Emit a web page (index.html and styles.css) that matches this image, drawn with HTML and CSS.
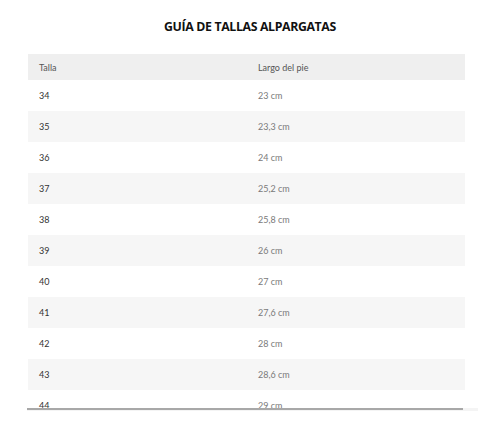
FILE: index.html
```html
<!DOCTYPE html>
<html lang="es">
<head>
<meta charset="utf-8">
<link rel="stylesheet" href="styles.css">
</head>
<body>
<h1 class="title">GUÍA DE TALLAS ALPARGATAS</h1>
<div class="table-wrap">
  <div class="table">
    <div class="row head"><span class="c1">Talla</span><span class="c2">Largo del pie</span></div>
    <div class="row"><span class="c1">34</span><span class="c2">23 cm</span></div>
    <div class="row alt"><span class="c1">35</span><span class="c2">23,3 cm</span></div>
    <div class="row"><span class="c1">36</span><span class="c2">24 cm</span></div>
    <div class="row alt"><span class="c1">37</span><span class="c2">25,2 cm</span></div>
    <div class="row"><span class="c1">38</span><span class="c2">25,8 cm</span></div>
    <div class="row alt"><span class="c1">39</span><span class="c2">26 cm</span></div>
    <div class="row"><span class="c1">40</span><span class="c2">27 cm</span></div>
    <div class="row alt"><span class="c1">41</span><span class="c2">27,6 cm</span></div>
    <div class="row"><span class="c1">42</span><span class="c2">28 cm</span></div>
    <div class="row alt"><span class="c1">43</span><span class="c2">28,6 cm</span></div>
    <div class="row"><span class="c1">44</span><span class="c2">29 cm</span></div>
  </div>
</div>
<div class="scroll"><div class="thumb"></div></div>
</body>
</html>
```

FILE: styles.css
```css
html, body { margin: 0; padding: 0; background: #fff; }
body { font-family: "Open Sans", sans-serif; }
.title {
  margin: 0;
  padding-top: 17px;
  height: 54px;
  box-sizing: border-box;
  text-align: center;
  font-size: 12.3px;
  font-weight: 700;
  color: #111;
  letter-spacing: -0.35px;
  line-height: 20px;
}
.table-wrap {
  margin-left: 28px;
  width: 437px;
  height: 354px;
  overflow: hidden;
}
.row {
  display: flex;
  align-items: center;
  height: 31px;
  font-family: "Lato", sans-serif;
  font-size: 9px;
}
.row.head { height: 26px; background: #efefef; }
.row.alt { background: #f6f6f6; }
.c1 { width: 219px; padding-left: 11px; color: #333; }
.c2 { color: #7a7a7a; }
.head .c1, .head .c2 { color: #555; }
.scroll {
  margin-left: 27px;
  width: 451px;
  height: 3px;
  background: #f4f4f4;
}
.thumb {
  width: 436px;
  height: 2px;
  background: #a8a8a8;
}
```
